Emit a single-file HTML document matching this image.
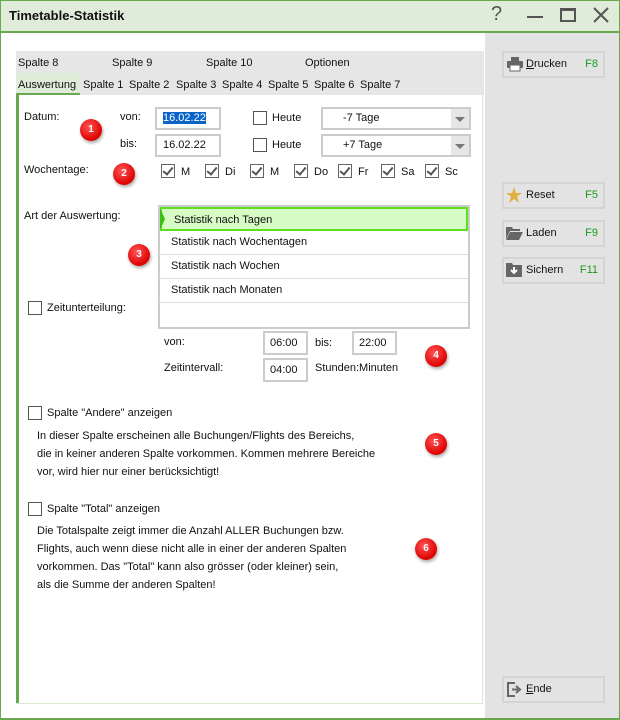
<!DOCTYPE html>
<html><head><meta charset="utf-8"><style>
*{box-sizing:border-box;margin:0;padding:0}
body{width:620px;height:720px;position:relative;overflow:hidden;background:#fff;font-family:"Liberation Sans","DejaVu Sans",sans-serif;font-size:11px;color:#111}
.a{position:absolute;white-space:nowrap}
.cb{position:absolute;width:14px;height:14px;border:1px solid #555;background:#fff}
.ck{position:absolute;width:14px;height:14px;border:1px solid #666;background:#fff}
.ck:after{content:"";position:absolute;left:3px;top:0px;width:4px;height:8px;border:solid #555;border-width:0 2px 2px 0;transform:rotate(40deg)}
.inp{position:absolute;border:2px solid #ccc;background:#fff;padding:3px 6px;height:23px}
.sel{position:absolute;border:2px solid #ccc;background:#fff;height:23px;padding:3px 0 0 20px;width:150px}
.sel:after{content:"";position:absolute;right:0;top:0;width:18px;height:19px;background:#e6e6e6}
.sel i{position:absolute;right:4px;top:8px;border:5px solid transparent;border-top:5px solid #777;z-index:1}
.badge{position:absolute;width:22px;height:22px;border-radius:50%;background:radial-gradient(circle at 40% 35%,#f55,#d00 70%);color:#fff;font-weight:bold;font-size:10px;text-align:center;line-height:22px;box-shadow:1px 2px 3px rgba(0,0,0,.35)}
.btn{position:absolute;left:502px;width:103px;height:27px;border:2px solid #d4d4d4;background:#e3e3e3;font-size:11px}
.btn .t{position:absolute;left:22px;top:5px}
.btn .k{position:absolute;right:5px;top:5px;color:#1a9a1a}
.li{position:absolute;left:159px;width:309px;height:24px;border-bottom:1px solid #ddd;padding:5px 0 0 12px}
</style></head><body>
<div class="a" style="left:0;top:0;width:620px;height:33px;background:#dfecd9;border:1px solid #6aa84f;border-bottom:2px solid #6aa84f"></div>
<div class="a" style="left:9px;top:8px;font-weight:bold;font-size:13px">Timetable-Statistik</div>
<div class="a" style="left:491px;top:3px;font-size:20px;color:#555">?</div>
<div class="a" style="left:527px;top:16px;width:16px;height:2px;background:#555"></div>
<div class="a" style="left:560px;top:8px;width:16px;height:14px;border:2px solid #555;border-top-width:3px"></div>
<svg class="a" style="left:593px;top:7px" width="16" height="16"><path d="M1 1L15 15M15 1L1 15" stroke="#555" stroke-width="2"/></svg>
<div class="a" style="left:0;top:33px;width:1px;height:687px;background:#6aa84f"></div>
<div class="a" style="left:619px;top:33px;width:1px;height:687px;background:#6aa84f"></div>
<div class="a" style="left:0;top:718px;width:620px;height:2px;background:#6aa84f"></div>
<div class="a" style="left:485px;top:33px;width:134px;height:685px;background:#e3e3e3"></div>
<!-- tabs -->
<div class="a" style="left:16px;top:51px;width:468px;height:22px;background:#e6e6e6"></div>
<div class="a" style="left:16px;top:73px;width:468px;height:22px;background:#e6e6e6"></div>
<div class="a" style="left:16px;top:73px;width:64px;height:22px;background:#dfecd9;border-bottom:2px solid #6aa84f"></div>
<div class="a" style="left:18px;top:57px">Spalte 8</div>
<div class="a" style="left:112px;top:57px">Spalte 9</div>
<div class="a" style="left:206px;top:57px">Spalte 10</div>
<div class="a" style="left:305px;top:57px">Optionen</div>
<div class="a" style="left:18px;top:79px">Auswertung</div>
<div class="a" style="left:83px;top:79px">Spalte 1</div>
<div class="a" style="left:129px;top:79px">Spalte 2</div>
<div class="a" style="left:176px;top:79px">Spalte 3</div>
<div class="a" style="left:222px;top:79px">Spalte 4</div>
<div class="a" style="left:268px;top:79px">Spalte 5</div>
<div class="a" style="left:314px;top:79px">Spalte 6</div>
<div class="a" style="left:360px;top:79px">Spalte 7</div>
<div class="a" style="left:16px;top:95px;width:3px;height:609px;background:#6aa84f"></div>
<div class="a" style="left:482px;top:95px;width:1px;height:609px;background:#d8e8d0"></div>
<div class="a" style="left:16px;top:703px;width:467px;height:1px;background:#d8e8d0"></div>
<!-- datum -->
<div class="a" style="left:24px;top:111px">Datum:</div>
<div class="badge" style="left:80px;top:119px">1</div>
<div class="a" style="left:120px;top:111px">von:</div>
<div class="a" style="left:120px;top:138px">bis:</div>
<div class="inp" style="left:155px;top:107px;width:66px"><span style="background:#0a64c8;color:#fff">16.02.22</span></div>
<div class="inp" style="left:155px;top:134px;width:66px">16.02.22</div>
<div class="cb" style="left:253px;top:111px"></div><div class="a" style="left:272px;top:112px">Heute</div>
<div class="cb" style="left:253px;top:138px"></div><div class="a" style="left:272px;top:139px">Heute</div>
<div class="sel" style="left:321px;top:107px">-7 Tage<i></i></div>
<div class="sel" style="left:321px;top:134px">+7 Tage<i></i></div>
<div class="a" style="left:24px;top:164px">Wochentage:</div>
<div class="badge" style="left:113px;top:163px">2</div>
<div class="ck" style="left:161px;top:164px"></div><div class="a" style="left:181px;top:166px">M</div>
<div class="ck" style="left:205px;top:164px"></div><div class="a" style="left:225px;top:166px">Di</div>
<div class="ck" style="left:250px;top:164px"></div><div class="a" style="left:270px;top:166px">M</div>
<div class="ck" style="left:294px;top:164px"></div><div class="a" style="left:314px;top:166px">Do</div>
<div class="ck" style="left:338px;top:164px"></div><div class="a" style="left:358px;top:166px">Fr</div>
<div class="ck" style="left:381px;top:164px"></div><div class="a" style="left:401px;top:166px">Sa</div>
<div class="ck" style="left:425px;top:164px"></div><div class="a" style="left:445px;top:166px">Sc</div>
<!-- art -->
<div class="a" style="left:24px;top:210px">Art der Auswertung:</div>
<div class="a" style="left:158px;top:205px;width:312px;height:124px;border:2px solid #ccc;background:#fff"></div>
<div class="li" style="top:207px;background:#d6fbc4;border:2px solid #5fe01f;left:160px;width:308px">Statistik nach Tagen</div>
<div class="a" style="left:160px;top:208px;border-left:5px solid #3cc010;border-top:11px solid transparent;border-bottom:11px solid transparent;height:0"></div>
<div class="li" style="top:231px">Statistik nach Wochentagen</div>
<div class="li" style="top:255px">Statistik nach Wochen</div>
<div class="li" style="top:279px">Statistik nach Monaten</div>
<div class="badge" style="left:128px;top:244px">3</div>
<div class="cb" style="left:28px;top:301px"></div><div class="a" style="left:47px;top:302px">Zeitunterteilung:</div>
<div class="a" style="left:164px;top:336px">von:</div>
<div class="inp" style="left:263px;top:331px;width:45px;height:24px;padding:4px 5px">06:00</div>
<div class="a" style="left:315px;top:337px">bis:</div>
<div class="inp" style="left:352px;top:331px;width:45px;height:24px;padding:4px 5px">22:00</div>
<div class="a" style="left:164px;top:362px">Zeitintervall:</div>
<div class="inp" style="left:263px;top:358px;width:45px;height:24px;padding:4px 5px">04:00</div>
<div class="a" style="left:315px;top:362px">Stunden:Minuten</div>
<div class="badge" style="left:425px;top:345px">4</div>
<!-- andere -->
<div class="cb" style="left:28px;top:406px"></div><div class="a" style="left:47px;top:407px">Spalte "Andere" anzeigen</div>
<div class="a" style="left:37px;top:427px;line-height:18px">In dieser Spalte erscheinen alle Buchungen/Flights des Bereichs,<br>die in keiner anderen Spalte vorkommen. Kommen mehrere Bereiche<br>vor, wird hier nur einer berücksichtigt!</div>
<div class="badge" style="left:425px;top:433px">5</div>
<div class="cb" style="left:28px;top:502px"></div><div class="a" style="left:47px;top:503px">Spalte "Total" anzeigen</div>
<div class="a" style="left:37px;top:522px;line-height:18px">Die Totalspalte zeigt immer die Anzahl ALLER Buchungen bzw.<br>Flights, auch wenn diese nicht alle in einer der anderen Spalten<br>vorkommen. Das "Total" kann also grösser (oder kleiner) sein,<br>als die Summe der anderen Spalten!</div>
<div class="badge" style="left:415px;top:538px">6</div>
<!-- buttons -->
<div class="btn" style="top:51px"><svg class="a" style="left:3px;top:4px" width="16" height="15"><rect x="4" y="0" width="8" height="4" fill="#666"/><rect x="0" y="4" width="16" height="7" rx="1" fill="#666"/><rect x="3" y="8" width="10" height="6" fill="#fff" stroke="#666"/></svg><span class="t"><u>D</u>rucken</span><span class="k">F8</span></div>
<div class="btn" style="top:182px"><svg class="a" style="left:2px;top:3px" width="16" height="16"><path d="M8 0L10 6H16L11 9.5L13 16L8 12L3 16L5 9.5L0 6H6Z" fill="#e0b040"/></svg><span class="t">Reset</span><span class="k">F5</span></div>
<div class="btn" style="top:220px"><svg class="a" style="left:2px;top:4px" width="17" height="14"><path d="M0 1H6L7 3H14V5H4L0 13Z" fill="#666"/><path d="M4 6H17L13 14H0Z" fill="#666"/></svg><span class="t">Laden</span><span class="k">F9</span></div>
<div class="btn" style="top:257px"><svg class="a" style="left:2px;top:3px" width="16" height="15"><path d="M0 1H6L7 3H16V15H0Z" fill="#666"/><path d="M8 5V11M5 8L8 11L11 8" stroke="#fff" stroke-width="2" fill="none"/></svg><span class="t">Sichern</span><span class="k">F11</span></div>
<div class="btn" style="top:676px"><svg class="a" style="left:2px;top:3px" width="17" height="17"><path d="M9 2H2V15H9" stroke="#666" stroke-width="2" fill="none"/><path d="M6 8.5H12M10 5L14 8.5L10 12" stroke="#666" stroke-width="2" fill="none"/></svg><span class="t"><u>E</u>nde</span></div>
</body></html>
